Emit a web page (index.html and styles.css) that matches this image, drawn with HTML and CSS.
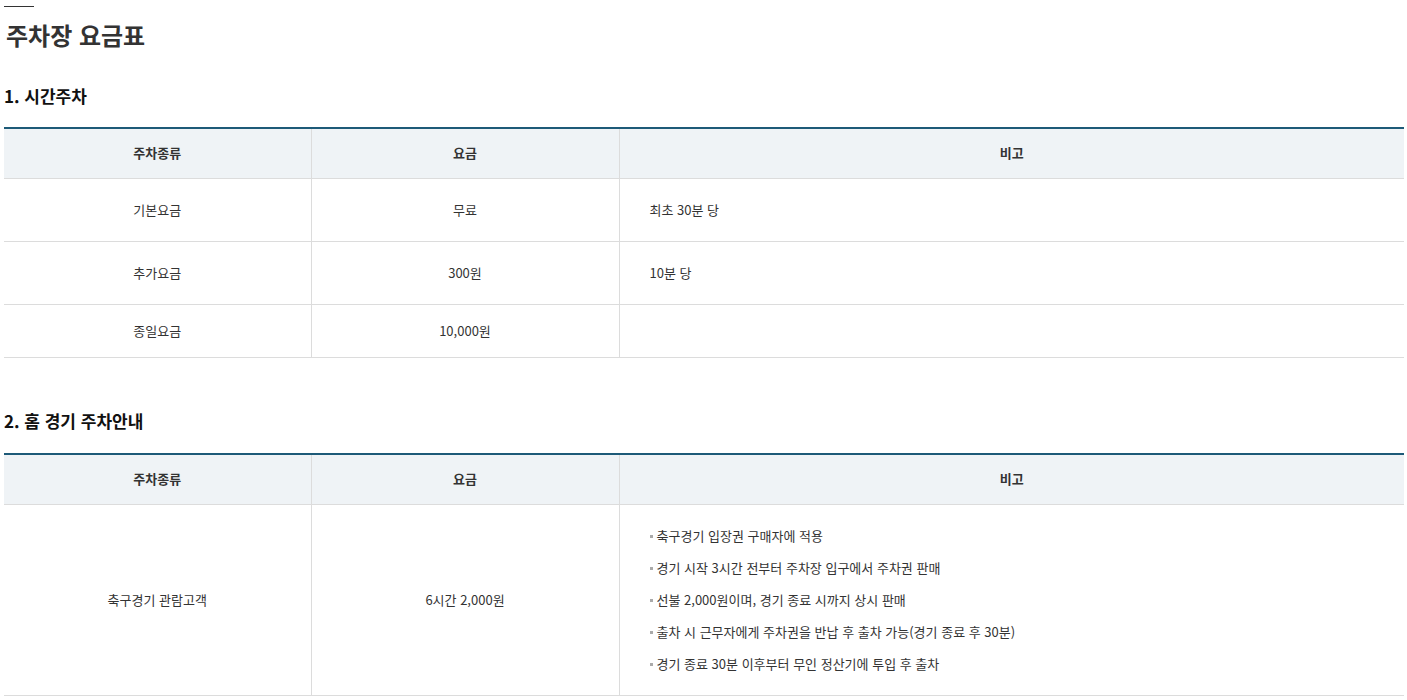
FILE: index.html
```html
<!DOCTYPE html>
<html lang="ko">
<head>
<meta charset="utf-8">
<title>주차장 요금표</title>
<link rel="stylesheet" href="styles.css">
</head>
<body>
<div class="page">
  <div class="bar"></div>
  <h1 class="title">주차장 요금표</h1>

  <h2 class="sub first">1. 시간주차</h2>
  <table class="fee">
    <colgroup><col class="c1"><col class="c2"><col></colgroup>
    <thead>
      <tr><th>주차종류</th><th>요금</th><th>비고</th></tr>
    </thead>
    <tbody>
      <tr><td>기본요금</td><td>무료</td><td class="note">최초 30분 당</td></tr>
      <tr><td>추가요금</td><td>300원</td><td class="note">10분 당</td></tr>
      <tr class="short"><td>종일요금</td><td>10,000원</td><td class="note"></td></tr>
    </tbody>
  </table>

  <h2 class="sub second">2. 홈 경기 주차안내</h2>
  <table class="fee">
    <colgroup><col class="c1"><col class="c2"><col></colgroup>
    <thead>
      <tr><th>주차종류</th><th>요금</th><th>비고</th></tr>
    </thead>
    <tbody>
      <tr class="tall">
        <td>축구경기 관람고객</td>
        <td>6시간 2,000원</td>
        <td class="note">
          <ul class="dots">
            <li>축구경기 입장권 구매자에 적용</li>
            <li>경기 시작 3시간 전부터 주차장 입구에서 주차권 판매</li>
            <li>선불 2,000원이며, 경기 종료 시까지 상시 판매</li>
            <li>출차 시 근무자에게 주차권을 반납 후 출차 가능(경기 종료 후 30분)</li>
            <li>경기 종료 30분 이후부터 무인 정산기에 투입 후 출차</li>
          </ul>
        </td>
      </tr>
    </tbody>
  </table>
</div>
</body>
</html>
```

FILE: styles.css
```css
* { box-sizing: border-box; }
html, body { margin: 0; padding: 0; background: #fff; }
body {
  font-family: "Noto Sans CJK KR", "Noto Sans", sans-serif;
  color: #333;
}
.page {
  padding: 0 3px 0 4px;
}
.bar {
  width: 30px;
  height: 1px;
  background: #333;
  margin-top: 6px;
}
.title {
  margin: 12px 0 0 2px;
  font-size: 24px;
  line-height: 32px;
  font-weight: 700;
  color: #333;
}
.sub {
  margin: 0;
  font-size: 17px;
  line-height: 24px;
  font-weight: 700;
  color: #111;
}
.sub.first { margin-top: 33px; margin-bottom: 19px; }
.sub.second { margin-top: 51px; margin-bottom: 20px; }

.fee {
  width: 100%;
  border-collapse: collapse;
  table-layout: fixed;
  border-top: 2px solid #1d5a78;
  font-size: 13px;
}
.fee col.c1 { width: 307px; }
.fee col.c2 { width: 308px; }
.fee th {
  background: #eff3f6;
  font-weight: 700;
  color: #333;
  line-height: 20px;
  padding: 14px 0 15px;
  border-bottom: 1px solid #dcdcdc;
  text-align: center;
}
.fee td {
  line-height: 20px;
  padding: 21px 0;
  border-bottom: 1px solid #dcdcdc;
  text-align: center;
  color: #333;
}
.fee th + th,
.fee td + td {
  border-left: 1px solid #dcdcdc;
}
.fee td.note {
  text-align: left;
  padding-left: 30px;
}
.fee tr.short td { padding: 16px 0; }
.fee tr.tall td { padding: 15px 0; }
.fee tr.tall td.note { padding-left: 30px; }

.dots {
  list-style: none;
  margin: 0;
  padding: 0;
}
.dots li {
  line-height: 32px;
  display: flex;
  align-items: center;
  gap: 4px;
}
.dots li::before {
  content: "";
  width: 3px;
  height: 3px;
  background: #aaa;
  display: block;
  flex: none;
  margin-top: 1px;
}
```
